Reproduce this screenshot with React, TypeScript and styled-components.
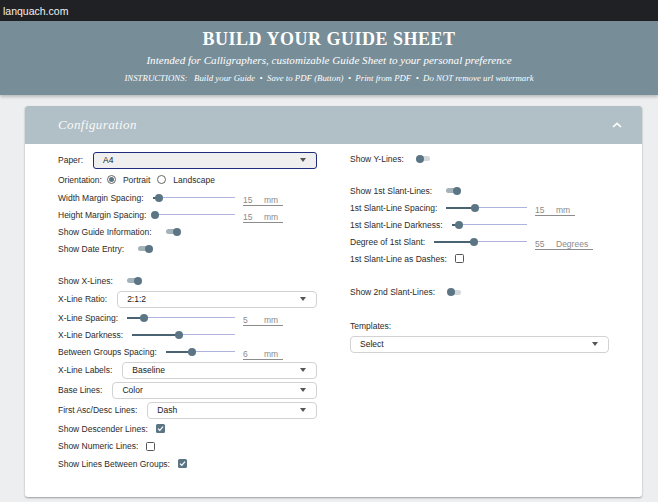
import React from 'react';
import styled, { createGlobalStyle } from 'styled-components';

const GlobalStyle = createGlobalStyle`
  html, body {
    margin: 0;
    padding: 0;
    background: #eceef0;
  }
  body {
    width: 658px;
    height: 502px;
    overflow: hidden;
    font-family: "Liberation Sans", Arial, sans-serif;
  }
`;

const TopBar = styled.div`
  height: 21px;
  background: #202124;
  color: #f1f1f1;
  font-size: 10.5px;
  display: flex;
  align-items: center;
  padding-left: 3px;
`;

const Banner = styled.header`
  position: relative;
  z-index: 1;
  height: 74px;
  background: #778d98;
  box-shadow: 0 2px 3px rgba(0, 0, 0, 0.22);
  display: flex;
  flex-direction: column;
  align-items: center;
  color: #fff;
  font-family: "Liberation Serif", "Times New Roman", serif;
`;

const Title = styled.h1`
  margin: 8px 0 0;
  font-size: 18px;
  line-height: 20px;
  letter-spacing: 0.5px;
  font-weight: bold;
`;

const Subtitle = styled.div`
  margin-top: 4px;
  font-size: 11.1px;
  line-height: 14px;
  font-style: italic;
`;

const Instructions = styled.div`
  margin-top: 5px;
  font-size: 8.8px;
  line-height: 12px;
  font-style: italic;
  white-space: pre;
`;

const Main = styled.main`
  padding: 11px 16px 0 25px;
`;

const Card = styled.section`
  background: #fff;
  border-radius: 3px;
  overflow: hidden;
  box-shadow: 0 1px 2px rgba(0, 0, 0, 0.35);
`;

const CardHeader = styled.div`
  height: 38px;
  background: #b1c0c6;
  display: flex;
  align-items: center;
  justify-content: space-between;
  padding: 0 20px 0 33px;
`;

const CardTitle = styled.span`
  font-family: "Liberation Serif", "Times New Roman", serif;
  font-style: italic;
  font-size: 13px;
  letter-spacing: 0.4px;
  color: #f7f9fa;
`;

const CardBody = styled.div`
  display: grid;
  grid-template-columns: 1fr 1fr;
  column-gap: 33px;
  padding: 6px 33px 24px;
`;

const Column = styled.div`
  display: flex;
  flex-direction: column;
`;

const Row = styled.div<{ $h?: number }>`
  height: ${(p) => p.$h ?? 17}px;
  display: flex;
  align-items: center;
`;

const Spacer = styled.div<{ $h: number }>`
  height: ${(p) => p.$h}px;
`;

const Label = styled.span`
  font-size: 8.5px;
  color: #2b2b2b;
  white-space: nowrap;
`;

const SelectBox = styled.div<{ $focus?: boolean; $flush?: boolean }>`
  flex: 1;
  height: 17px;
  box-sizing: border-box;
  margin-left: ${(p) => (p.$flush ? 0 : 10)}px;
  padding: 0 10px 0 9px;
  display: flex;
  align-items: center;
  justify-content: space-between;
  font-size: 8.5px;
  color: #222;
  border-radius: ${(p) => (p.$focus ? 3 : 4)}px;
  border: ${(p) => (p.$focus ? '1.5px solid #1f2c7c' : '1px solid #d2d2d2')};
  background: ${(p) => (p.$focus ? '#efefef' : '#fff')};
`;

const Caret = styled.span`
  width: 0;
  height: 0;
  border-left: 3.5px solid transparent;
  border-right: 3.5px solid transparent;
  border-top: 4px solid #555;
`;

const Track = styled.div`
  position: relative;
  flex: 1;
  height: 8px;
  margin-left: 9px;
  &::before {
    content: "";
    position: absolute;
    left: 0;
    right: 0;
    top: 3.5px;
    height: 1px;
    background: #aeb3de;
  }
`;

const Fill = styled.div`
  position: absolute;
  left: 0;
  top: 3px;
  height: 2px;
  background: #4a6373;
`;

const Thumb = styled.div`
  position: absolute;
  top: 0;
  width: 8px;
  height: 8px;
  margin-left: -4px;
  border-radius: 50%;
  background: #5b7585;
`;

const FieldSlot = styled.div`
  width: 82px;
  flex-shrink: 0;
  padding-left: 8px;
  box-sizing: border-box;
`;

const Field = styled.span`
  display: inline-flex;
  font-size: 8.5px;
  line-height: 10px;
  color: #8a8a8a;
  border-bottom: 1px solid #8c8c8c;
  margin-top: 3px;
  padding-right: 5px;
`;

const FieldValue = styled.span`
  width: 21px;
`;

const ToggleWrap = styled.div<{ $on: boolean }>`
  position: relative;
  width: 17px;
  height: 8px;
  margin-left: 12px;
  &::before {
    content: "";
    position: absolute;
    left: 2px;
    top: 1.5px;
    width: 12px;
    height: 5px;
    border-radius: 3px;
    background: ${(p) => (p.$on ? '#a4b2ba' : '#d3d8dc')};
  }
`;

const Knob = styled.div<{ $on: boolean }>`
  position: absolute;
  top: 0;
  left: ${(p) => (p.$on ? 9 : 0)}px;
  width: 8px;
  height: 8px;
  border-radius: 50%;
  background: #5b7585;
`;

const Box = styled.span<{ $checked: boolean }>`
  width: 9px;
  height: 9px;
  margin-left: 8px;
  box-sizing: border-box;
  border-radius: 1.5px;
  display: flex;
  align-items: center;
  justify-content: center;
  border: ${(p) => (p.$checked ? 'none' : '1px solid #555')};
  background: ${(p) => (p.$checked ? '#5b7585' : '#fff')};
`;

const Radio = styled.span<{ $checked?: boolean }>`
  width: 9px;
  height: 9px;
  box-sizing: border-box;
  margin-left: ${(p) => (p.$checked ? 5 : 7)}px;
  border: 1px solid #666;
  border-radius: 50%;
  display: flex;
  align-items: center;
  justify-content: center;
  &::after {
    content: "";
    width: 5px;
    height: 5px;
    border-radius: 50%;
    background: ${(p) => (p.$checked ? '#5b7585' : 'transparent')};
  }
`;

const RadioText = styled(Label)`
  margin-left: 7px;
`;

const Select = ({ value, focus, flush }: { value: string; focus?: boolean; flush?: boolean }) => (
  <SelectBox $focus={focus} $flush={flush}>
    <span>{value}</span>
    <Caret />
  </SelectBox>
);

const SelectRow = ({ label, value, focus }: { label: string; value: string; focus?: boolean }) => (
  <Row $h={20}>
    <Label>{label}</Label>
    <Select value={value} focus={focus} />
  </Row>
);

const SliderRow = ({ label, pct, value, unit }: { label: string; pct: number; value?: string; unit?: string }) => (
  <Row>
    <Label>{label}</Label>
    <Track>
      <Fill style={{ width: `${pct}%` }} />
      <Thumb style={{ left: `${pct}%` }} />
    </Track>
    <FieldSlot>
      {value && (
        <Field>
          <FieldValue>{value}</FieldValue>
          {unit}
        </Field>
      )}
    </FieldSlot>
  </Row>
);

const ToggleRow = ({ label, on }: { label: string; on: boolean }) => (
  <Row>
    <Label>{label}</Label>
    <ToggleWrap $on={on}>
      <Knob $on={on} />
    </ToggleWrap>
  </Row>
);

const CheckRow = ({ label, checked }: { label: string; checked: boolean }) => (
  <Row $h={17.5}>
    <Label>{label}</Label>
    <Box $checked={checked}>
      {checked && (
        <svg width="7" height="7" viewBox="0 0 7 7">
          <polyline points="1,3.6 2.8,5.3 6,1.6" fill="none" stroke="#fff" strokeWidth="1.2" />
        </svg>
      )}
    </Box>
  </Row>
);

export default function App() {
  return (
    <>
      <GlobalStyle />
      <TopBar>lanquach.com</TopBar>
      <Banner>
        <Title>BUILD YOUR GUIDE SHEET</Title>
        <Subtitle>Intended for Calligraphers, customizable Guide Sheet to your personal preference</Subtitle>
        <Instructions>
          {'INSTRUCTIONS:   Build your Guide  •  Save to PDF (Button)  •  Print from PDF  •  Do NOT remove url watermark'}
        </Instructions>
      </Banner>
      <Main>
        <Card>
          <CardHeader>
            <CardTitle>Configuration</CardTitle>
            <svg width="10" height="6" viewBox="0 0 10 6">
              <polyline points="1,5 5,1.3 9,5" fill="none" stroke="#fff" strokeWidth="1.6" />
            </svg>
          </CardHeader>
          <CardBody>
            <Column>
              <SelectRow label="Paper:" value="A4" focus />
              <Row $h={19}>
                <Label>Orientation:</Label>
                <Radio $checked />
                <RadioText>Portrait</RadioText>
                <Radio />
                <RadioText>Landscape</RadioText>
              </Row>
              <SliderRow label="Width Margin Spacing:" pct={8} value="15" unit="mm" />
              <SliderRow label="Height Margin Spacing:" pct={0} value="15" unit="mm" />
              <ToggleRow label="Show Guide Information:" on />
              <ToggleRow label="Show Date Entry:" on />
              <Spacer $h={15} />
              <ToggleRow label="Show X-Lines:" on />
              <SelectRow label="X-Line Ratio:" value="2:1:2" />
              <SliderRow label="X-Line Spacing:" pct={16} value="5" unit="mm" />
              <SliderRow label="X-Line Darkness:" pct={46} />
              <SliderRow label="Between Groups Spacing:" pct={38} value="6" unit="mm" />
              <SelectRow label="X-Line Labels:" value="Baseline" />
              <SelectRow label="Base Lines:" value="Color" />
              <SelectRow label="First Asc/Desc Lines:" value="Dash" />
              <CheckRow label="Show Descender Lines:" checked />
              <CheckRow label="Show Numeric Lines:" checked={false} />
              <CheckRow label="Show Lines Between Groups:" checked />
            </Column>
            <Column>
              <ToggleRow label="Show Y-Lines:" on={false} />
              <Spacer $h={15} />
              <ToggleRow label="Show 1st Slant-Lines:" on />
              <SliderRow label="1st Slant-Line Spacing:" pct={35} value="15" unit="mm" />
              <SliderRow label="1st Slant-Line Darkness:" pct={10} />
              <SliderRow label="Degree of 1st Slant:" pct={43} value="55" unit="Degrees" />
              <CheckRow label="1st Slant-Line as Dashes:" checked={false} />
              <Spacer $h={16} />
              <ToggleRow label="Show 2nd Slant-Lines:" on={false} />
              <Spacer $h={17} />
              <Row>
                <Label>Templates:</Label>
              </Row>
              <Row $h={19}>
                <Select value="Select" flush />
              </Row>
            </Column>
          </CardBody>
        </Card>
      </Main>
    </>
  );
}
